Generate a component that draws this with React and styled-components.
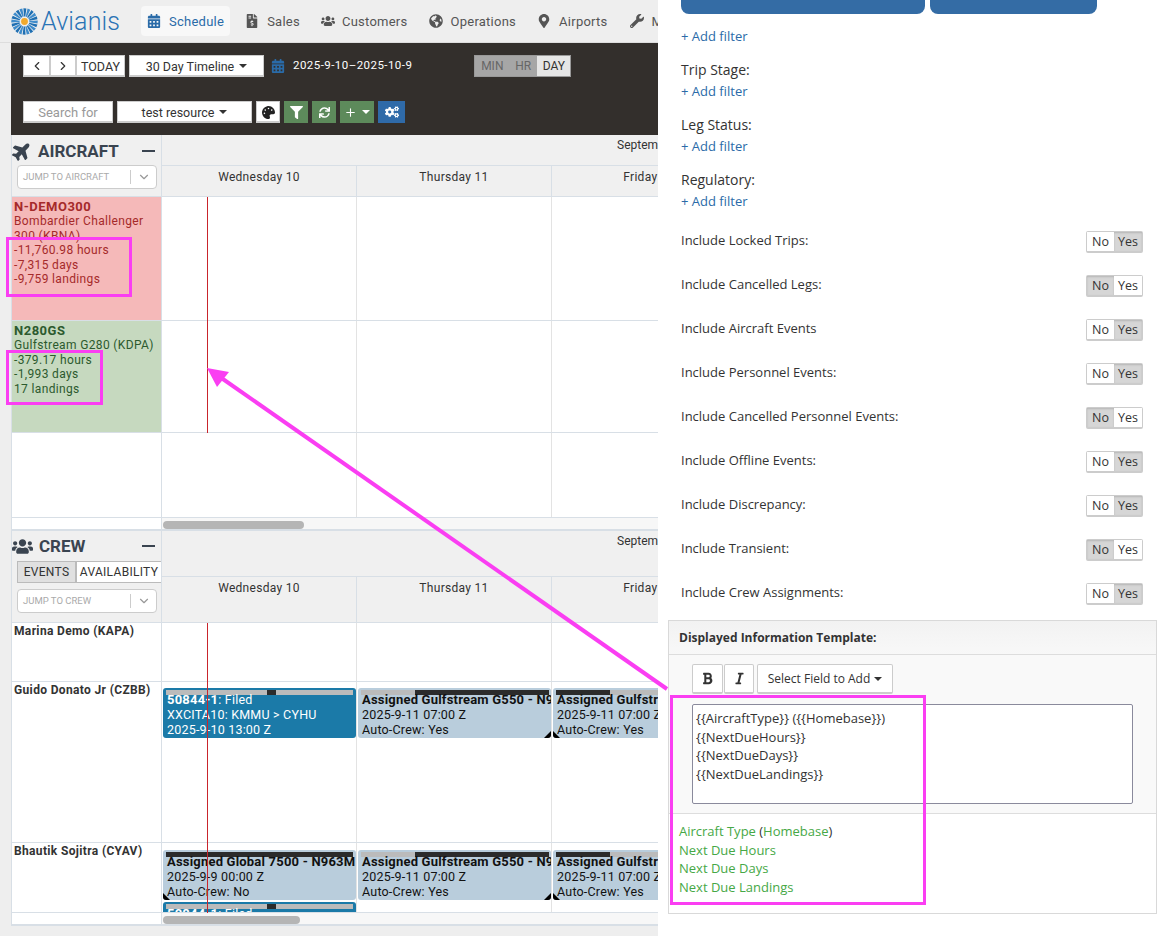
import React from "react";
import styled, { createGlobalStyle } from "styled-components";
import {
  FaBold,
  FaCalendarAlt,
  FaCogs,
  FaFileInvoiceDollar,
  FaFilter,
  FaGlobeAmericas,
  FaItalic,
  FaMapMarkerAlt,
  FaPalette,
  FaPlane,
  FaSync,
  FaUsers,
  FaWrench,
} from "react-icons/fa";
import { ChevronDown, ChevronLeft, ChevronRight, Plus } from "lucide-react";

const GlobalStyle = createGlobalStyle`
  html, body {
    margin: 0;
    padding: 0;
    background: #fff;
    overflow: hidden;
  }
  * {
    box-sizing: border-box;
  }
`;

const Page = styled.div`
  position: relative;
  display: flex;
  width: 1165px;
  height: 936px;
  overflow: hidden;
  font-family: Roboto, "Liberation Sans", sans-serif;
`;

const LeftPane = styled.div`
  width: 658px;
  flex: none;
  background: #eeeeee;
  overflow: hidden;
`;

const Nav = styled.nav`
  display: flex;
  align-items: center;
  height: 43px;
  padding-left: 11px;
  border-bottom: 1px solid #dddddd;
  white-space: nowrap;
`;

const Logo = styled.div`
  display: flex;
  align-items: center;
  gap: 3px;
  width: 130px;
  flex: none;
  color: #2a73b5;
  font-size: 25px;
  font-weight: 300;
  letter-spacing: 0.15px;
`;

const NavItem = styled.div`
  display: flex;
  align-items: center;
  gap: ${(p) => p.$gap || 8}px;
  height: 30px;
  flex: none;
  margin-right: ${(p) => p.$after || 20}px;
  padding: 0 ${(p) => (p.$active ? 6 : 0)}px;
  border-radius: 4px;
  background: ${(p) => (p.$active ? "#f8f8f8" : "transparent")};
  color: ${(p) => (p.$active ? "#2a6ba8" : "#555555")};
  font-size: 13px;
  letter-spacing: 0.25px;
  svg {
    font-size: 14px;
  }
`;

const Toolbar = styled.div`
  display: flex;
  flex-direction: column;
  gap: 24px;
  height: 92px;
  margin-left: 11px;
  padding: 12px 12px 0;
  background: #332f2c;
`;

const ToolRow = styled.div`
  display: flex;
  align-items: center;
  height: 22px;
`;

const ToolButton = styled.div`
  display: flex;
  align-items: center;
  justify-content: center;
  gap: 5px;
  width: ${(p) => p.$w}px;
  height: 22px;
  flex: none;
  margin-left: ${(p) => p.$ml || 0}px;
  padding-top: 1px;
  background: ${(p) => p.$bg || "#ffffff"};
  border: 1px solid ${(p) => p.$line || "#cccccc"};
  border-bottom-width: 2px;
  color: ${(p) => p.$color || "#333333"};
  font-size: ${(p) => p.$size || 12.5}px;
  white-space: nowrap;
`;

const Caret = styled.span`
  display: inline-block;
  width: 0;
  height: 0;
  border-left: 4px solid transparent;
  border-right: 4px solid transparent;
  border-top: 4px solid ${(p) => p.$color || "#333333"};
`;

const DateIcon = styled.span`
  display: flex;
  margin-left: 7px;
  color: #2a6ba8;
  font-size: 14px;
`;

const DateText = styled.span`
  margin-left: 8px;
  margin-top: -2px;
  color: #ffffff;
  font-size: 11.5px;
  letter-spacing: 0.45px;
  white-space: nowrap;
`;

const Scale = styled.div`
  display: flex;
  margin-left: 62px;
  height: 22px;
  border: 1px solid #999999;
  font-size: 12px;
`;

const ScaleItem = styled.span`
  display: flex;
  align-items: center;
  justify-content: center;
  width: ${(p) => p.$w}px;
  background: ${(p) => (p.$on ? "#e6e6e6" : "#a6a6a6")};
  color: ${(p) => (p.$on ? "#333333" : "#666666")};
`;

const Board = styled.div`
  margin-left: 11px;
  width: 647px;
  overflow: hidden;
  border-left: 1px solid #d8dfe6;
`;

const Row = styled.div`
  display: flex;
  height: ${(p) => p.$h}px;
  border-bottom: ${(p) => p.$line || 1}px solid #d8dfe6;
`;

const Side = styled.div`
  width: 150px;
  flex: none;
  padding: 3px 2px 0;
  background: ${(p) => p.$bg || "#ffffff"};
  border-right: 1px solid #d8dfe6;
  color: ${(p) => p.$color || "#333333"};
  font-size: 12px;
  line-height: 14.4px;
  letter-spacing: 0.35px;
  overflow: hidden;
`;

const Tail = styled.div`
  font-weight: 700;
  font-size: 13px;
  letter-spacing: 0.5px;
`;

const Person = styled.div`
  font-weight: 700;
  font-size: 12px;
  white-space: nowrap;
  margin-top: -2px;
`;

const HeadSide = styled(Side)`
  position: relative;
  padding: 0;
  background: #f0f0f0;
`;

const SectionTitle = styled.div`
  display: flex;
  align-items: center;
  gap: 6px;
  height: 30px;
  padding-top: ${(p) => p.$pad}px;
  color: #3a4450;
  font-size: 17px;
  font-weight: 700;
  letter-spacing: 0;
  svg {
    font-size: ${(p) => p.$icon}px;
    color: #3a4450;
  }
`;

const Collapse = styled.span`
  margin-left: auto;
  margin-right: 6px;
  width: 13px;
  height: 2px;
  background: #3a4450;
`;

const Tabs = styled.div`
  display: flex;
  margin: 0 0 6px 5px;
  height: 22px;
  font-size: 12px;
  letter-spacing: 0.3px;
  color: #333333;
`;

const Tab = styled.span`
  display: flex;
  align-items: center;
  justify-content: center;
  width: ${(p) => p.$w}px;
  flex: none;
  background: ${(p) => (p.$on ? "#e0e0e0" : "#ffffff")};
  border: 1px solid #bbbbbb;
  border-right: ${(p) => (p.$on ? "1px solid #bbbbbb" : "none")};
  white-space: nowrap;
`;

const JumpBox = styled.div`
  display: flex;
  align-items: center;
  width: 140px;
  height: 24px;
  margin-left: 5px;
  padding-left: 5px;
  background: #ffffff;
  border: 1px solid #cccccc;
  border-radius: 4px;
  color: #aaaaaa;
  font-size: 9.5px;
  letter-spacing: 0;
  white-space: nowrap;
`;

const JumpArrow = styled.span`
  display: flex;
  align-items: center;
  justify-content: center;
  margin-left: auto;
  width: 26px;
  height: 14px;
  border-left: 1px solid #cccccc;
  color: #999999;
`;

const HeadMain = styled.div`
  display: flex;
  flex-direction: column;
  flex: none;
  width: 496px;
`;

const MonthRow = styled.div`
  height: ${(p) => p.$h}px;
  padding: 3px 0 0 455px;
  background: #f0f0f0;
  border-bottom: 1px solid #d8dfe6;
  color: #333333;
  font-size: 12px;
  white-space: nowrap;
`;

const DayRow = styled.div`
  display: flex;
  flex: 1;
  background: #f0f0f0;
`;

const DayCell = styled.div`
  width: 195px;
  flex: none;
  padding-top: 4px;
  border-right: 1px solid #d8dfe6;
  color: #333333;
  font-size: 12px;
  letter-spacing: 0.3px;
  text-align: center;
  white-space: nowrap;
`;

const Cells = styled.div`
  display: flex;
  flex: none;
  background: #ffffff;
`;

const Cell = styled.div`
  width: 195px;
  flex: none;
  padding-top: ${(p) => p.$pad || 0}px;
  border-right: 1px solid #e3e3e3;
  overflow: hidden;
`;

const NowGroup = styled.div`
  position: relative;
`;

const NowLine = styled.span`
  position: absolute;
  left: 195px;
  top: 0;
  bottom: 0;
  width: 1px;
  background: #c9252c;
`;

const Scroller = styled.div`
  flex: 1;
  padding: 3px 0 0 1px;
  background: #f7f7f7;
`;

const Thumb = styled.div`
  width: ${(p) => p.$w}px;
  height: 8px;
  border-radius: 4px;
  background: #b5b5b5;
`;

const Event = styled.div`
  position: relative;
  width: 193px;
  height: 50px;
  margin: 0 0 2px 1px;
  padding: 2px 3px 0;
  border-radius: 3px;
  background: ${(p) => (p.$filed ? "#1b7aa8" : "#b9cddc")};
  color: ${(p) => (p.$filed ? "#ffffff" : "#111111")};
  font-size: 12.5px;
  line-height: 15px;
  letter-spacing: 0.2px;
  white-space: nowrap;
  overflow: hidden;
  &::after {
    content: "";
    display: ${(p) => (p.$corner ? "block" : "none")};
    position: absolute;
    bottom: 0;
    ${(p) => p.$corner}: 0;
    border-bottom: 7px solid #000000;
    border-${(p) => (p.$corner === "left" ? "right" : "left")}: 7px solid transparent;
  }
`;

const Track = styled.div`
  height: 5px;
  margin-bottom: -3px;
  background: #bbbbbb;
`;

const TrackFill = styled.div`
  height: 5px;
  width: ${(p) => p.$w}px;
  margin-left: ${(p) => p.$at}px;
  background: #2b2b2b;
`;

const EventLine = styled.div`
  padding-left: 1px;
  font-weight: ${(p) => (p.$bold ? 700 : 400)};
  font-size: ${(p) => (p.$bold ? "13px" : "inherit")};
  b {
    font-weight: 700;
    font-size: 13px;
  }
`;

const RightPane = styled.div`
  flex: 1;
  padding-left: 10px;
  background: #ffffff;
  color: #333333;
  font-family: "Open Sans", "Liberation Sans", sans-serif;
  font-size: 13px;
`;

const BlueRow = styled.div`
  display: flex;
  gap: 5px;
  padding-left: 13px;
`;

const BlueTab = styled.div`
  width: ${(p) => p.$w}px;
  height: 14px;
  background: #346ca5;
  border-radius: 0 0 8px 8px;
`;

const FilterGroup = styled.div`
  margin-top: ${(p) => p.$top || 16}px;
  padding-left: 13px;
`;

const FilterLabel = styled.div`
  margin-bottom: 3px;
  font-size: 14px;
  line-height: 18px;
`;

const AddFilter = styled.div`
  color: #2a6ba8;
  font-size: 13px;
  line-height: 18px;
`;

const ToggleList = styled.div`
  display: flex;
  flex-direction: column;
  gap: 22px;
  margin-top: 21px;
  padding: 0 22px 0 13px;
`;

const ToggleRow = styled.div`
  display: flex;
  align-items: center;
  justify-content: space-between;
  height: 22px;
  font-size: 13px;
`;

const ToggleLabel = styled.span`
  margin-top: -5px;
`;

const Toggle = styled.div`
  display: flex;
  height: 22px;
  border: 1px solid #cccccc;
  border-bottom-width: 2px;
  border-radius: 2px;
`;

const ToggleOption = styled.span`
  display: flex;
  align-items: center;
  justify-content: center;
  width: ${(p) => p.$w}px;
  background: ${(p) => (p.$on ? "#d6d6d6" : "#ffffff")};
  box-shadow: ${(p) => (p.$on ? "inset 0 1px 2px rgba(0,0,0,0.15)" : "none")};
  font-size: 12.5px;
`;

const Panel = styled.div`
  width: 489px;
  height: 294px;
  margin-top: 15px;
  border: 1px solid #d9d9d9;
`;

const PanelHead = styled.div`
  height: 34px;
  padding: 0 10px;
  display: flex;
  align-items: center;
  background: linear-gradient(#f2f2f2, #f8f8f8);
  border-bottom: 1px solid #dddddd;
  font-size: 12px;
  font-weight: 700;
`;

const PanelBody = styled.div`
  height: 159px;
  padding: 9px 23px 0;
  background: #f9f9f9;
  border-bottom: 1px solid #dddddd;
`;

const EditorTools = styled.div`
  display: flex;
  gap: 1px;
  height: 30px;
  margin-bottom: 10px;
`;

const EditorButton = styled.div`
  display: flex;
  align-items: center;
  justify-content: center;
  gap: 4px;
  width: ${(p) => p.$w}px;
  margin-left: ${(p) => p.$ml || 0}px;
  background: #ffffff;
  border: 1px solid #cccccc;
  border-bottom-width: 2px;
  border-radius: 2px;
  color: #333333;
  font-size: 12px;
  svg {
    font-size: 13px;
  }
`;

const TemplateBox = styled.div`
  width: 441px;
  height: 100px;
  padding: 4px 3px;
  background: #ffffff;
  border: 1px solid #8a8a9c;
  border-radius: 2px;
  font-size: 13px;
  line-height: 18.5px;
  white-space: pre;
`;

const Preview = styled.div`
  padding: 8px 10px;
  color: #333333;
  font-size: 13px;
  line-height: 18.6px;
`;

const Green = styled.span`
  color: #46a846;
`;

const Annotation = styled.div`
  position: absolute;
  left: ${(p) => p.$x}px;
  top: ${(p) => p.$y}px;
  width: ${(p) => p.$w}px;
  height: ${(p) => p.$h}px;
  border: 3.5px solid #fa3ef2;
`;

const ArrowLayer = styled.svg`
  position: absolute;
  left: 0;
  top: 0;
  width: 1165px;
  height: 936px;
  pointer-events: none;
`;

const rays = Array.from({ length: 20 }, (_, i) => i * 18);

const Sunburst = () => (
  <svg width="27" height="27" viewBox="0 0 27 27">
    {rays.map((deg, i) => (
      <path
        key={deg}
        d="M12.4 0.2 L15.4 0.5 L14.3 8.6 L13.1 8.6 Z"
        fill={i % 2 ? "#3f8ccb" : "#1f6fb2"}
        transform={`rotate(${deg} 13.5 13.5)`}
      />
    ))}
    <circle cx="13.5" cy="13.5" r="3.4" fill="#f0a92c" />
  </svg>
);

const days = ["Wednesday 10", "Thursday 11", "Friday 12"];

const Days = () => (
  <DayRow>
    {days.map((d) => (
      <DayCell key={d}>{d}</DayCell>
    ))}
  </DayRow>
);

const EmptyCells = ({ n = 3 }) => (
  <Cells>
    {Array.from({ length: n }, (_, i) => (
      <Cell key={i} />
    ))}
  </Cells>
);

const Assigned = ({ title, date, crew, at, w, corner }) => (
  <Event $corner={corner}>
    <Track>
      <TrackFill $at={at} $w={w} />
    </Track>
    <EventLine $bold>{title}</EventLine>
    <EventLine>{date}</EventLine>
    <EventLine>{crew}</EventLine>
  </Event>
);

const Filed = () => (
  <Event $filed>
    <Track>
      <TrackFill $at={101} $w={9} />
    </Track>
    <EventLine>
      <b>50844-1</b>: Filed
    </EventLine>
    <EventLine>XXCITA10: KMMU &gt; CYHU</EventLine>
    <EventLine>2025-9-10 13:00 Z</EventLine>
  </Event>
);

const Gulf550 = () => (
  <Assigned
    title="Assigned Gulfstream G550 - N963M"
    date="2025-9-11 07:00 Z"
    crew="Auto-Crew: Yes"
    at={54}
    w={134}
    corner="right"
  />
);

const Gulf550Next = () => (
  <Assigned
    title="Assigned Gulfstream G550 - N963M"
    date="2025-9-11 07:00 Z"
    crew="Auto-Crew: Yes"
    at={0}
    w={54}
    corner="left"
  />
);

const toggles = [
  ["Include Locked Trips:", true],
  ["Include Cancelled Legs:", false],
  ["Include Aircraft Events", true],
  ["Include Personnel Events:", true],
  ["Include Cancelled Personnel Events:", false],
  ["Include Offline Events:", true],
  ["Include Discrepancy:", true],
  ["Include Transient:", false],
  ["Include Crew Assignments:", true],
];

const App = () => {
  return (
    <Page>
      <GlobalStyle />
      <LeftPane>
        <Nav>
          <Logo>
            <Sunburst />
            Avianis
          </Logo>
          <NavItem $active $after={15}>
            <FaCalendarAlt />
            Schedule
          </NavItem>
          <NavItem $after={21}>
            <FaFileInvoiceDollar />
            Sales
          </NavItem>
          <NavItem $after={21} $gap={7}>
            <FaUsers />
            Customers
          </NavItem>
          <NavItem $after={21}>
            <FaGlobeAmericas />
            Operations
          </NavItem>
          <NavItem $after={22}>
            <FaMapMarkerAlt />
            Airports
          </NavItem>
          <NavItem>
            <FaWrench />
            Maintenance
          </NavItem>
        </Nav>
        <Toolbar>
          <ToolRow>
            <ToolButton $w={27}>
              <ChevronLeft size={14} />
            </ToolButton>
            <ToolButton $w={26}>
              <ChevronRight size={14} />
            </ToolButton>
            <ToolButton $w={49}>TODAY</ToolButton>
            <ToolButton $w={135} $ml={4}>
              30 Day Timeline <Caret />
            </ToolButton>
            <DateIcon>
              <FaCalendarAlt />
            </DateIcon>
            <DateText>2025-9-10–2025-10-9</DateText>
            <Scale>
              <ScaleItem $w={34}>MIN</ScaleItem>
              <ScaleItem $w={28}>HR</ScaleItem>
              <ScaleItem $w={33} $on>
                DAY
              </ScaleItem>
            </Scale>
          </ToolRow>
          <ToolRow>
            <ToolButton $w={90} $color="#999999" $size={13}>
              Search for
            </ToolButton>
            <ToolButton $w={135} $ml={4}>
              test resource <Caret />
            </ToolButton>
            <ToolButton $w={24} $ml={4} $color="#222222">
              <FaPalette size={13} />
            </ToolButton>
            <ToolButton $w={24} $ml={4} $bg="#5d8a5b" $line="#5d8a5b" $color="#fff">
              <FaFilter size={13} />
            </ToolButton>
            <ToolButton $w={24} $ml={4} $bg="#5d8a5b" $line="#5d8a5b" $color="#fff">
              <FaSync size={11} />
            </ToolButton>
            <ToolButton $w={34} $ml={4} $bg="#5d8a5b" $line="#5d8a5b" $color="#fff">
              <Plus size={13} />
              <Caret $color="#ffffff" />
            </ToolButton>
            <ToolButton $w={27} $ml={4} $bg="#2f6aa8" $line="#2f6aa8" $color="#fff">
              <FaCogs size={14} />
            </ToolButton>
          </ToolRow>
        </Toolbar>
        <Board>
          <Row $h={62}>
            <HeadSide>
              <SectionTitle $icon={20} $pad={2}>
                <FaPlane style={{ transform: "rotate(-45deg)" }} />
                AIRCRAFT
                <Collapse />
              </SectionTitle>
              <JumpBox>
                JUMP TO AIRCRAFT
                <JumpArrow>
                  <ChevronDown size={14} />
                </JumpArrow>
              </JumpBox>
            </HeadSide>
            <HeadMain>
              <MonthRow $h={31}>September 2025</MonthRow>
              <Days />
            </HeadMain>
          </Row>
          <NowGroup>
            <Row $h={124}>
              <Side $bg="#f5b9b9" $color="#a52a2a">
                <Tail>N-DEMO300</Tail>
                Bombardier Challenger 300 (KBNA)
                <br />
                -11,760.98 hours
                <br />
                -7,315 days
                <br />
                -9,759 landings
              </Side>
              <EmptyCells />
            </Row>
            <Row $h={112}>
              <Side $bg="#c6d9bf" $color="#2c5a2e">
                <Tail>N280GS</Tail>
                Gulfstream G280 (KDPA)
                <br />
                -379.17 hours
                <br />
                -1,993 days
                <br />
                17 landings
              </Side>
              <EmptyCells />
            </Row>
            <NowLine />
          </NowGroup>
          <Row $h={85}>
            <Side />
            <EmptyCells />
          </Row>
          <Row $h={13} $line={2}>
            <Side />
            <Scroller>
              <Thumb $w={141} />
            </Scroller>
          </Row>
          <Row $h={92}>
            <HeadSide>
              <SectionTitle $icon={21} $pad={0}>
                <FaUsers />
                CREW
                <Collapse />
              </SectionTitle>
              <Tabs>
                <Tab $w={59} $on>
                  EVENTS
                </Tab>
                <Tab $w={85}>AVAILABILITY</Tab>
              </Tabs>
              <JumpBox>
                JUMP TO CREW
                <JumpArrow>
                  <ChevronDown size={14} />
                </JumpArrow>
              </JumpBox>
            </HeadSide>
            <HeadMain>
              <MonthRow $h={46}>September 2025</MonthRow>
              <Days />
            </HeadMain>
          </Row>
          <NowGroup>
            <Row $h={59}>
              <Side>
                <Person>Marina Demo (KAPA)</Person>
              </Side>
              <EmptyCells />
            </Row>
            <Row $h={161}>
              <Side>
                <Person>Guido Donato Jr (CZBB)</Person>
              </Side>
              <Cells>
                <Cell $pad={6}>
                  <Filed />
                </Cell>
                <Cell $pad={6}>
                  <Gulf550 />
                </Cell>
                <Cell $pad={6}>
                  <Gulf550Next />
                </Cell>
              </Cells>
            </Row>
            <Row $h={70}>
              <Side>
                <Person>Bhautik Sojitra (CYAV)</Person>
              </Side>
              <Cells>
                <Cell $pad={7}>
                  <Assigned
                    title="Assigned Global 7500 - N963M"
                    date="2025-9-9 00:00 Z"
                    crew="Auto-Crew: No"
                    at={0}
                    w={187}
                    corner="left"
                  />
                  <Filed />
                </Cell>
                <Cell $pad={7}>
                  <Gulf550 />
                </Cell>
                <Cell $pad={7}>
                  <Gulf550Next />
                </Cell>
              </Cells>
            </Row>
            <NowLine />
          </NowGroup>
          <Row $h={13} $line={2}>
            <Side />
            <Scroller>
              <Thumb $w={137} />
            </Scroller>
          </Row>
        </Board>
      </LeftPane>
      <RightPane>
        <BlueRow>
          <BlueTab $w={244} />
          <BlueTab $w={167} />
        </BlueRow>
        <FilterGroup $top={13}>
          <AddFilter>+ Add filter</AddFilter>
        </FilterGroup>
        <FilterGroup>
          <FilterLabel>Trip Stage:</FilterLabel>
          <AddFilter>+ Add filter</AddFilter>
        </FilterGroup>
        <FilterGroup>
          <FilterLabel>Leg Status:</FilterLabel>
          <AddFilter>+ Add filter</AddFilter>
        </FilterGroup>
        <FilterGroup>
          <FilterLabel>Regulatory:</FilterLabel>
          <AddFilter>+ Add filter</AddFilter>
        </FilterGroup>
        <ToggleList>
          {toggles.map(([label, yes]) => (
            <ToggleRow key={label}>
              <ToggleLabel>{label}</ToggleLabel>
              <Toggle>
                <ToggleOption $w={27} $on={!yes}>
                  No
                </ToggleOption>
                <ToggleOption $w={28} $on={yes}>
                  Yes
                </ToggleOption>
              </Toggle>
            </ToggleRow>
          ))}
        </ToggleList>
        <Panel>
          <PanelHead>Displayed Information Template:</PanelHead>
          <PanelBody>
            <EditorTools>
              <EditorButton $w={31}>
                <FaBold />
              </EditorButton>
              <EditorButton $w={30}>
                <FaItalic />
              </EditorButton>
              <EditorButton $w={136} $ml={2}>
                Select Field to Add <Caret />
              </EditorButton>
            </EditorTools>
            <TemplateBox>
              {"{{AircraftType}} ({{Homebase}})\n{{NextDueHours}}\n{{NextDueDays}}\n{{NextDueLandings}}"}
            </TemplateBox>
          </PanelBody>
          <Preview>
            <Green>Aircraft Type</Green> (<Green>Homebase</Green>)
            <br />
            <Green>Next Due Hours</Green>
            <br />
            <Green>Next Due Days</Green>
            <br />
            <Green>Next Due Landings</Green>
          </Preview>
        </Panel>
      </RightPane>
      <Annotation $x={6} $y={237} $w={126} $h={60} />
      <Annotation $x={6} $y={350} $w={97} $h={55} />
      <Annotation $x={670} $y={695} $w={256} $h={210} />
      <ArrowLayer viewBox="0 0 1165 936">
        <line x1="667" y1="689" x2="220" y2="377" stroke="#fa3ef2" strokeWidth="4" />
        <path d="M207 368 L229 372 L217 387 Z" fill="#fa3ef2" />
      </ArrowLayer>
    </Page>
  );
};

export default App;
